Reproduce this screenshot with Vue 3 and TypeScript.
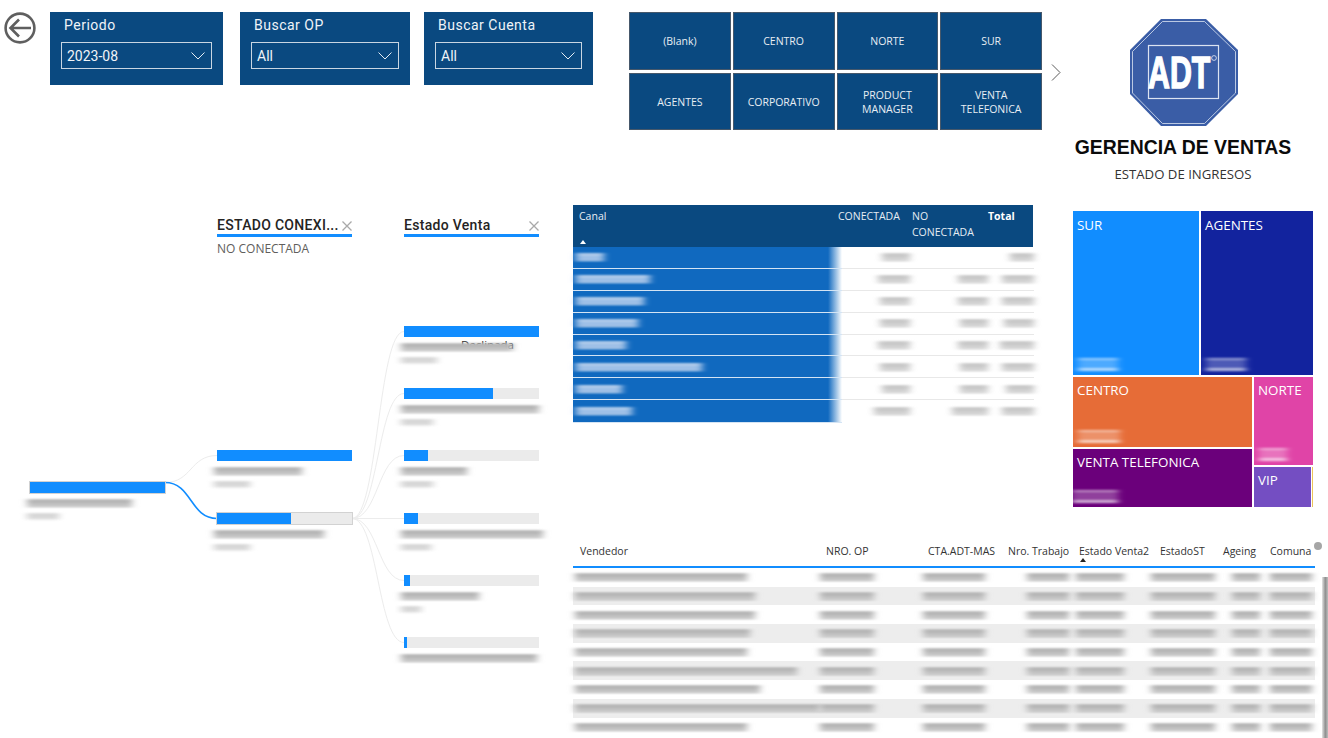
<script setup lang="ts">
interface TreeNode {
  fill: number
  label: number
  value: number
  selected?: boolean
  note?: string
}

const slicers = [
  { title: 'Periodo', value: '2023-08', width: 173 },
  { title: 'Buscar OP', value: 'All', width: 170 },
  { title: 'Buscar Cuenta', value: 'All', width: 169 },
]

const chips = ['(Blank)', 'CENTRO', 'NORTE', 'SUR', 'AGENTES', 'CORPORATIVO', 'PRODUCT MANAGER', 'VENTA TELEFONICA']

const levelTwo: TreeNode[] = [
  { fill: 100, label: 88, value: 36 },
  { fill: 55, label: 110, value: 36, selected: true },
]

const levelThree: TreeNode[] = [
  { fill: 100, label: 112, value: 36, note: 'Declinada' },
  { fill: 66, label: 138, value: 32 },
  { fill: 18, label: 66, value: 32 },
  { fill: 10, label: 142, value: 30 },
  { fill: 4.5, label: 78, value: 20 },
  { fill: 2.4, label: 136, value: 0 },
]

const canalRows = [
  { name: 28, a: 28, b: 0, c: 24 },
  { name: 74, a: 32, b: 30, c: 32 },
  { name: 68, a: 30, b: 30, c: 32 },
  { name: 62, a: 30, b: 28, c: 30 },
  { name: 50, a: 32, b: 30, c: 34 },
  { name: 126, a: 30, b: 28, c: 32 },
  { name: 46, a: 28, b: 28, c: 28 },
  { name: 56, a: 36, b: 36, c: 32 },
]

const vendorColumns = ['Vendedor', 'NRO. OP', 'CTA.ADT-MAS', 'Nro. Trabajo', 'Estado Venta2', 'EstadoST', 'Ageing', 'Comuna']
const vendorNames = [172, 180, 180, 175, 172, 222, 185, 245, 172]
const vendorCells = [54, 62, 42, 48, 64, 28, 42]
</script>

<template>
  <div class="page">
    <svg class="defs" width="0" height="0">
      <filter id="streak" x="-30%" y="-80%" width="160%" height="260%">
        <feGaussianBlur stdDeviation="3.5 0.9" />
      </filter>
    </svg>

    <header class="top">
      <svg class="back" viewBox="0 0 32 32" fill="none" stroke="#5f5f5f">
        <circle cx="16" cy="16" r="14.4" stroke-width="2.6" />
        <path d="M27 16H7M15 7.5 6.5 16l8.5 8.5" stroke-width="2.6" />
      </svg>

      <div class="slicers">
        <div v-for="s in slicers" :key="s.title" class="slicer" :style="{ width: s.width + 'px' }">
          <div class="slicer-title">{{ s.title }}</div>
          <div class="slicer-box">
            <span>{{ s.value }}</span>
            <svg width="14" height="8" viewBox="0 0 14 8" fill="none" stroke="#e4edf5">
              <path d="M.5.5 7 7l6.5-6.5" />
            </svg>
          </div>
        </div>
      </div>

      <div class="chips">
        <div v-for="c in chips" :key="c" class="chip">{{ c }}</div>
      </div>
      <svg class="chev" width="10" height="17" viewBox="0 0 10 17" fill="none" stroke="#5b5b5b">
        <path d="m1 .5 8 8-8 8" />
      </svg>

      <div class="brand">
        <svg class="logo" width="108" height="107" viewBox="0 0 108 107">
          <polygon points="31,0 76,0 108,31 108,75 76,107 31,107 0,75 0,31" fill="#3a5da6" />
          <polygon points="32.5,2.5 74.5,2.5 105.5,32.5 105.5,74 74.5,104.5 32.5,104.5 2.5,74 2.5,32.5" fill="none" stroke="#dbe3f1" stroke-width=".8" />
          <rect x="18.5" y="26.5" width="70" height="53" fill="none" stroke="#dbe3f1" stroke-width="1.2" />
          <text class="logo-text" transform="translate(18 68.5) scale(.69 1)">ADT</text>
          <circle cx="84" cy="39" r="2.4" fill="none" stroke="#fff" stroke-width=".7" />
        </svg>
        <div class="brand-title">GERENCIA DE VENTAS</div>
        <div class="brand-sub">ESTADO DE INGRESOS</div>
      </div>
    </header>

    <main class="board">
      <section class="tree">
        <svg class="links" width="573" height="533" fill="none" stroke="#ececec">
          <path d="M165 277.5C192 277.5 190 250.5 217 250.5" />
          <path d="M352 313.5C378 313.5 378 126.5 404 126.5" />
          <path d="M352 313.5C378 313.5 378 188.5 404 188.5" />
          <path d="M352 313.5C378 313.5 378 250.5 404 250.5" />
          <path d="M352 313.5H404" />
          <path d="M352 313.5C378 313.5 378 375.5 404 375.5" />
          <path d="M352 313.5C378 313.5 378 437.5 404 437.5" />
          <path d="M165 277.5C192 277.5 190 313.5 217 313.5" stroke="#118dff" stroke-width="1.6" />
        </svg>

        <div class="col col-root">
          <div class="node">
            <div class="bar bar-root"><div class="bar-fill" style="width: 100%"></div></div>
            <div class="smear smear-label" style="width: 105px"></div>
            <div class="smear smear-value" style="width: 32px"></div>
          </div>
        </div>

        <div class="col">
          <div class="col-head">
            <span>ESTADO CONEXI...</span>
            <svg width="10" height="10" viewBox="0 0 10 10" stroke="#a9a9a9" stroke-width="1.3"><path d="m.5.5 9 9M9.5.5l-9 9" /></svg>
          </div>
          <div class="col-sub">NO CONECTADA</div>
          <div class="nodes nodes-two">
            <div v-for="(n, i) in levelTwo" :key="i" class="node node-two">
              <div class="bar" :class="{ 'bar-selected': n.selected }">
                <div class="bar-fill" :style="{ width: n.fill + '%' }"></div>
              </div>
              <div class="smear smear-label" :style="{ width: n.label + 'px' }"></div>
              <div class="smear smear-value" :style="{ width: n.value + 'px' }"></div>
            </div>
          </div>
        </div>

        <div class="col">
          <div class="col-head">
            <span>Estado Venta</span>
            <svg width="10" height="10" viewBox="0 0 10 10" stroke="#a9a9a9" stroke-width="1.3"><path d="m.5.5 9 9M9.5.5l-9 9" /></svg>
          </div>
          <div class="nodes nodes-three">
            <div v-for="(n, i) in levelThree" :key="i" class="node node-three">
              <div class="bar">
                <div class="bar-fill" :style="{ width: n.fill + '%' }"></div>
              </div>
              <span v-if="n.note" class="node-note">{{ n.note }}</span>
              <div class="smear smear-label" :style="{ width: n.label + 'px' }"></div>
              <div v-if="n.value" class="smear smear-value" :style="{ width: n.value + 'px' }"></div>
            </div>
          </div>
        </div>
      </section>

      <section class="canal">
        <div class="canal-head">
          <div class="canal-title">Canal<i class="caret caret-white"></i></div>
          <div>CONECTADA</div>
          <div>NO<br />CONECTADA</div>
          <div class="canal-total">Total</div>
        </div>
        <div class="canal-body">
          <div v-for="(r, i) in canalRows" :key="i" class="canal-row">
            <div class="canal-name">
              <div class="smear smear-white" :style="{ width: r.name + 'px' }"></div>
            </div>
            <div class="smear smear-soft" :style="{ width: r.a + 'px' }"></div>
            <div class="smear smear-soft" :style="{ width: r.b + 'px' }"></div>
            <div class="smear smear-soft" :style="{ width: r.c + 'px' }"></div>
          </div>
        </div>
      </section>

      <section class="treemap">
        <div class="tm-top">
          <div class="tile sur">SUR<b class="tile-smear" style="width: 40px"></b></div>
          <div class="tile agentes">AGENTES<b class="tile-smear" style="width: 40px"></b></div>
        </div>
        <div class="tm-bottom">
          <div class="tm-left">
            <div class="tile centro">CENTRO<b class="tile-smear" style="width: 42px"></b></div>
            <div class="tile venta">VENTA TELEFONICA<b class="tile-smear tile-smear-out" style="width: 46px"></b></div>
          </div>
          <div class="tm-right">
            <div class="tile norte">NORTE<b class="tile-smear" style="width: 28px"></b></div>
            <div class="tm-small">
              <div class="tile vip">VIP</div>
              <div class="sliver"></div>
            </div>
          </div>
        </div>
      </section>

      <section class="vendors">
        <i class="scroll-dot"></i>
        <i class="scroll-bar"></i>
        <div class="vendor-head">
          <div v-for="c in vendorColumns" :key="c" class="vendor-col">
            {{ c }}<i v-if="c === 'Estado Venta2'" class="caret caret-dark"></i>
          </div>
        </div>
        <div v-for="(w, i) in vendorNames" :key="i" class="vendor-row">
          <div class="smear smear-row" :style="{ width: w + 'px' }"></div>
          <div v-for="(cw, j) in vendorCells" :key="j" class="smear smear-row" :style="{ width: cw + 'px' }"></div>
        </div>
      </section>
    </main>
  </div>
</template>

<style>
body {
  margin: 0;
  background: #fff;
}
</style>

<style scoped>
.page {
  width: 1328px;
  height: 738px;
  overflow: hidden;
  background: #fff;
  font-family: "Open Sans", "Noto Sans", sans-serif;
}
.defs {
  position: absolute;
}

.top {
  display: flex;
  align-items: flex-start;
  height: 205px;
  box-sizing: border-box;
  padding: 12px 0 0 4px;
}
.back {
  width: 32px;
  height: 32px;
  flex: none;
}
.slicers {
  display: flex;
  margin-left: 14px;
  gap: 14px;
}
.slicer:first-child {
  margin-right: 3px;
}
.slicer {
  height: 73px;
  box-sizing: border-box;
  padding: 5px 11px;
  background: #0a4980;
  color: #f0f4f8;
}
.slicer-title {
  margin-left: 3px;
  font: 400 14px/16px Roboto, sans-serif;
  letter-spacing: 0.5px;
}
.slicer-box {
  display: flex;
  align-items: center;
  justify-content: space-between;
  height: 27px;
  margin-top: 9px;
  box-sizing: border-box;
  padding: 1px 6px 0 5px;
  border: 1px solid #c9d6e2;
  font: 14px/16px Roboto, sans-serif;
}

.chips {
  display: grid;
  grid-template-columns: repeat(4, 101.75px);
  grid-template-rows: 58px 57px;
  gap: 3px 2px;
  margin-left: 36px;
  flex: none;
}
.chip {
  display: flex;
  align-items: center;
  justify-content: center;
  box-sizing: border-box;
  padding: 0 20px;
  border: 1px solid #46586b;
  background: #0a4980;
  color: #e8eef4;
  font-size: 10.5px;
  line-height: 14px;
  text-align: center;
}
.chev {
  margin: 52px 0 0 9px;
  flex: none;
}
.brand {
  display: flex;
  flex-direction: column;
  align-items: center;
  width: 230px;
  margin: 7px 0 0 7px;
  flex: none;
}
.logo {
  margin-left: 2px;
}
.logo-text {
  font: 700 44px "Liberation Sans", sans-serif;
  fill: #fff;
  stroke: #fff;
  stroke-width: 1.4px;
}
.brand-title {
  margin-top: 9px;
  font: 700 19.4px/24px "Liberation Sans", Arial, sans-serif;
  color: #0b0b0b;
}
.brand-sub {
  margin-top: 7px;
  font-size: 13.2px;
  line-height: 16px;
  color: #333;
}

.board {
  display: grid;
  grid-template-columns: 573px 500px 255px;
  grid-template-rows: 340px 193px;
}

.tree {
  grid-row: 1 / 3;
  position: relative;
  display: flex;
  gap: 52px;
  padding: 12px 0 0 30px;
}
.links {
  position: absolute;
  left: 0;
  top: 0;
}
.col {
  position: relative;
  width: 135px;
}
.col-root {
  padding-top: 265px;
}
.col-head {
  display: flex;
  align-items: center;
  justify-content: space-between;
  height: 20px;
  box-sizing: border-box;
  border-bottom: 3px solid #118dff;
  color: #252423;
  font: 500 14px/17px Roboto, sans-serif;
  letter-spacing: 0.3px;
  white-space: nowrap;
}
.col-sub {
  margin-top: 4px;
  height: 16px;
  color: #605e5c;
  font-size: 12px;
  line-height: 16px;
}
.nodes-two {
  margin-top: 193px;
}
.nodes-three {
  margin-top: 89px;
}
.node {
  position: relative;
}
.node-two {
  height: 63px;
}
.node-three {
  height: 62.2px;
}
.node-note {
  position: absolute;
  left: 57px;
  top: 11px;
  color: #252423;
  font-size: 11.5px;
  line-height: 16px;
}
.bar {
  height: 11px;
  background: #ebebeb;
}
.bar-fill {
  height: 100%;
  background: #118dff;
}
.bar-root,
.bar-selected {
  box-shadow: 0 0 0 1px #d2d2d2;
}

.smear {
  position: relative;
  filter: url(#streak);
  background: linear-gradient(#d0d0d0 0 1px, #8a8a8a 1px 2px, #c6c6c6 2px 4px, #959595 4px 5px, #d6d6d6 5px 7px, #9e9e9e 7px 8px);
}
.smear-label {
  height: 8px;
  margin: 6px 0 0 -3px;
}
.smear-value {
  height: 7px;
  margin: 6px 0 0 -3px;
  opacity: 0.55;
}
.smear-white {
  height: 8px;
  background: linear-gradient(#7fb0e2 0 1px, #f4f9fe 1px 2px, #73a9de 2px 4px, #dceafa 4px 5px, #6ba3db 5px 7px, #eef5fd 7px 8px);
}
.smear-soft {
  height: 8px;
  justify-self: end;
  opacity: 0.75;
}
.smear-row {
  height: 8px;
}

.canal {
  width: 460px;
}
.canal-head {
  display: grid;
  grid-template-columns: 259px 74px 76px 45px;
  height: 42px;
  box-sizing: border-box;
  padding: 3px 0 0 6px;
  background: #0a4980;
  color: #e6edf4;
  font-size: 10.5px;
  line-height: 16px;
}
.canal-title {
  position: relative;
}
.canal-total {
  color: #fff;
  font-weight: 700;
}
.caret {
  position: absolute;
  width: 0;
  height: 0;
  border-left: 3.5px solid transparent;
  border-right: 3.5px solid transparent;
}
.caret-white {
  left: 1px;
  top: 32px;
  border-bottom: 4px solid #fff;
}
.caret-dark {
  left: 1px;
  top: 14px;
  border-bottom: 4px solid #252423;
}
.canal-body {
  display: grid;
  grid-auto-rows: 1fr;
  height: 175px;
}
.canal-row {
  display: grid;
  grid-template-columns: 269px 68px 78px 46px;
  align-items: center;
  border-bottom: 1px solid #e8e8e8;
}
.canal-row:last-child {
  border-bottom: 0;
}
.canal-name {
  display: flex;
  align-items: center;
  align-self: stretch;
  padding-left: 3px;
  margin-bottom: -1px;
  border-bottom: 1px solid #d4e4f4;
  background: linear-gradient(90deg, #1069bf 0 255px, rgba(16, 105, 191, 0) 269px);
}

.treemap {
  display: flex;
  flex-direction: column;
  gap: 2px;
  width: 240px;
  height: 296px;
  margin-top: 6px;
}
.tm-top {
  display: flex;
  gap: 2px;
  height: 164px;
}
.tm-bottom {
  display: flex;
  gap: 2px;
  flex: 1;
}
.tm-left {
  display: flex;
  flex-direction: column;
  gap: 2px;
  width: 179px;
}
.tm-right {
  display: flex;
  flex-direction: column;
  gap: 2px;
  flex: 1;
}
.tm-small {
  display: flex;
  gap: 1px;
  height: 40px;
}
.tile {
  display: flex;
  flex-direction: column;
  justify-content: space-between;
  box-sizing: border-box;
  padding: 5px 4px 4px 4px;
  color: #fff;
  font-size: 13.4px;
  line-height: 18px;
  white-space: nowrap;
}
.tm-bottom .tile {
  padding-top: 4px;
}
.tile-smear {
  display: block;
  height: 13px;
  margin-left: 1px;
  filter: url(#streak);
  background: linear-gradient(#ffffff90 0 2px, #ffffff40 2px 10px, #ffffffb0 10px);
}
.tile-smear-out {
  margin-left: -5px;
}
.sur {
  width: 126px;
  background: #118dff;
}
.agentes {
  flex: 1;
  background: #12239e;
}
.centro {
  height: 70px;
  background: #e66c37;
}
.venta {
  flex: 1;
  background: #6b007b;
}
.norte {
  flex: 1;
  background: #e044a7;
}
.vip {
  flex: 1;
  background: #744ec2;
}
.sliver {
  width: 1px;
  background: #ebc35a;
}

.vendors {
  grid-column: 2 / 4;
  position: relative;
  width: 742px;
}
.scroll-dot {
  position: absolute;
  left: 741px;
  top: -3px;
  width: 8px;
  height: 8px;
  border-radius: 50%;
  background: #a6a6a6;
}
.scroll-bar {
  position: absolute;
  left: 749px;
  top: 32px;
  width: 6px;
  height: 161px;
  background: linear-gradient(90deg, #e4e4e4, #8f8f8f 55%, #bdbdbd);
}
.vendor-head {
  display: grid;
  grid-template-columns: 246px 102px 80px 71px 81px 63px 47px 45px;
  height: 22px;
  margin-top: -1px;
  padding: 0 0 0 7px;
  border-bottom: 2px solid #118dff;
  color: #333;
  font-size: 10.5px;
  line-height: 14px;
  white-space: nowrap;
}
.vendor-col {
  position: relative;
}
.vendor-row {
  display: grid;
  grid-template-columns: 245px 103px 104px 49px 75px 81px 38px 46px;
  align-items: center;
  height: 18.7px;
  padding-left: 2px;
}
.vendor-row:nth-of-type(odd) {
  background: #ededed;
}
</style>
